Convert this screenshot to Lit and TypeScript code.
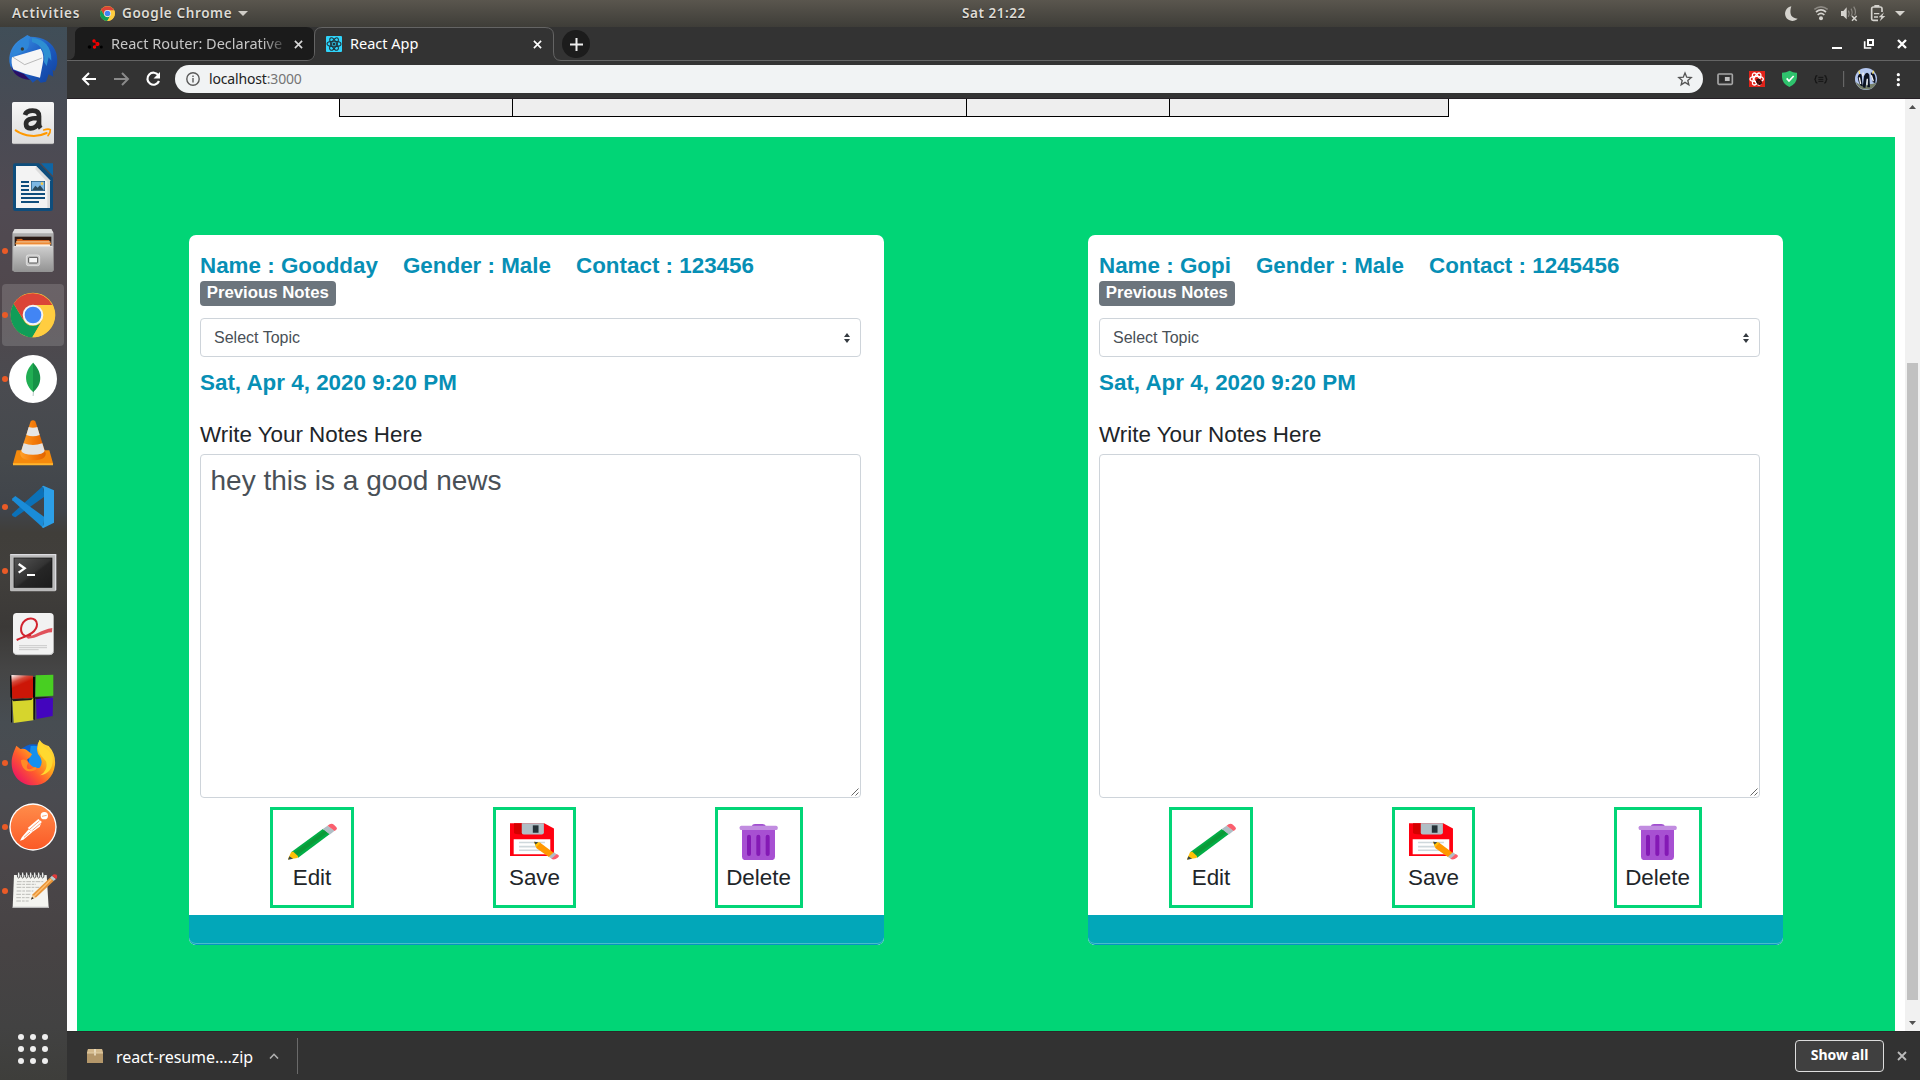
import { LitElement, html, css, svg } from "lit";
import { customElement, property } from "lit/decorators.js";

const chromeLogo = svg`
  <circle cx="99" cy="105" r="67" fill="#fbc73a"/>
  <path d="M41 71A67 67 0 0 0 97 172L127 121A32 32 0 0 1 70 119Z" fill="#109d58"/>
  <path d="M157 74H99L127 121 97 172A67 67 0 0 0 157 74Z" fill="#ffcd40"/>
  <path d="M41 71A67 67 0 0 1 157 75H99L70 119Z" fill="#db4437"/>
  <circle cx="99" cy="105" r="31" fill="#f4f4f4"/><circle cx="99" cy="105" r="25" fill="#4285f4"/>`;

const dockItems: { box: string; on?: boolean; active?: boolean; art: unknown }[] = [
  {
    box: "27 45 144 144",
    art: svg`<defs><linearGradient id="tb" x1="0" y1="0" x2="1" y2="1"><stop offset="0" stop-color="#3f9de8"/><stop offset=".5" stop-color="#1f5fc4"/><stop offset="1" stop-color="#0f3f9c"/></linearGradient></defs>
      <path d="M28 125C26 92 44 66 72 52L82 45 91 50C128 50 160 66 169 100 174 122 172 140 164 153L158 150 160 170 146 163 138 185 122 188 112 178 98 188 90 178C62 176 32 160 28 125Z" fill="url(#tb)"/>
      <path d="M34 138C36 158 54 176 90 180L72 162 40 150Z" fill="#2a0f66"/>
      <path d="M36 112L122 86Q134 104 128 132L120 173Q80 166 40 148Q32 130 36 112Z" fill="#f6f6f6"/>
      <path d="M38 111L74 134 126 114" fill="none" stroke="#9a9a9a" stroke-width="2"/>
      <path d="M36 112C38 84 58 56 84 48L92 52C80 60 92 70 84 84 76 98 52 98 36 112Z" fill="#2f86d8"/>
      <path d="M96 54C132 56 156 80 154 122L146 112 140 138 132 126C136 100 126 74 96 66Z" fill="#2e8fd2"/>
      <circle cx="67" cy="87" r="5" fill="#3a3a30"/>`,
  },
  {
    box: "27 237 144 144",
    art: svg`<defs><linearGradient id="am" x1="0" y1="0" x2="0" y2="1"><stop offset="0" stop-color="#f7f7f7"/><stop offset="1" stop-color="#dcdcdc"/></linearGradient></defs>
      <rect x="36" y="246" width="126" height="126" rx="5" fill="url(#am)"/><path d="M38 371H160" stroke="#aaa" stroke-width="2"/>
      <path d="M75 285Q79 272 98 272Q117 272 117 289V312Q117 319 122 325M116 294Q78 293 78 312Q78 325 92 325Q108 325 116 309" fill="none" stroke="#2b2b2b" stroke-width="14"/>
      <path d="M47 331C74 350 112 353 140 339" fill="none" stroke="#f90" stroke-width="6" stroke-linecap="round"/>
      <path d="M131 330Q145 325 151 329Q152 338 144 347" fill="none" stroke="#f90" stroke-width="5" stroke-linecap="round"/>`,
  },
  {
    box: "27 429 144 144",
    art: svg`<path d="M45 430H117L159 473V566Q159 573 152 573H46Q39 573 39 566V437Q39 430 45 430Z" fill="#0e4d7c"/>
      <path d="M123 430H159V467Z" fill="#0f66a5"/><path d="M48 438H108L150 481V564H48Z" fill="#f3f3f3"/>
      <path d="M108 438L150 481V564H142V486L106 448Z" fill="#dcdcdc"/>
      <path d="M63 486H87M63 498H87M63 510H87M63 522H135M63 534H135M63 546H117" stroke="#0e4d7c" stroke-width="6"/>
      <rect x="94" y="484" width="40" height="28" fill="#7db7e3" stroke="#0e4d7c" stroke-width="2"/><path d="M96 511L106 497 113 503 120 496 132 511Z" fill="#2a4a5c"/><circle cx="126" cy="491" r="4" fill="#f5c84a"/>`,
  },
  {
    box: "27 621 144 144", on: true,
    art: svg`<defs><linearGradient id="fl" x1="0" y1="0" x2="0" y2="1"><stop offset="0" stop-color="#cfcfcf"/><stop offset="1" stop-color="#929292"/></linearGradient></defs>
      <path d="M44 627H154L161 642V752H37V642Z" fill="#adadad"/><path d="M44 627H154L161 640H37Z" fill="#dedede"/>
      <rect x="44" y="650" width="110" height="30" fill="#2a1a14"/><path d="M50 664V658L64 656 70 660H148V682H50Z" fill="#d9651c"/><rect x="48" y="664" width="103" height="4" fill="#f7cf9a"/><rect x="46" y="668" width="107" height="5" fill="#ee8b35"/><rect x="48" y="673" width="103" height="6" fill="#fff1dc"/>
      <rect x="40" y="678" width="119" height="78" rx="4" fill="url(#fl)"/><path d="M42 679H157" stroke="#efefef" stroke-width="2"/>
      <rect x="79" y="705" width="40" height="32" rx="6" fill="#c9c9c9" stroke="#eee" stroke-width="2"/><rect x="86" y="712" width="27" height="17" rx="2" fill="#f4f4f4" stroke="#555" stroke-width="3"/>`,
  },
  { box: "27 33 144 144", on: true, active: true, art: chromeLogo },
  {
    box: "27 225 144 144", on: true,
    art: svg`<circle cx="99" cy="297" r="72" fill="#fff"/><path d="M99 330L98 348H101L102 330Z" fill="#b8c4c2"/>
      <path d="M99 248C78 270 66 302 97 334L100 337V248Z" fill="#21ae53"/><path d="M99 248C120 268 134 304 102 334L99 337Z" fill="#169247"/>`,
  },
  {
    box: "27 417 144 144",
    art: svg`<defs><linearGradient id="vl" x1="0" y1="0" x2="1" y2="0"><stop offset="0" stop-color="#ffa02a"/><stop offset=".5" stop-color="#f57d0b"/><stop offset="1" stop-color="#e06300"/></linearGradient></defs>
      <path d="M50 511H148L159 550V555H39V550Z" fill="#f58a0c"/><path d="M39 550H159V556H39Z" fill="#ffb52e"/>
      <path d="M92 424Q99 417 106 424L137 520Q138 541 99 541T61 520Z" fill="url(#vl)"/>
      <path d="M86 441Q99 446 112 441L119 465Q99 473 79 465Z" fill="#e6e6e6"/><path d="M71 490Q99 500 127 490L134 513Q130 524 99 524T64 513Z" fill="#e2e2e2"/>`,
  },
  {
    box: "27 609 144 144", on: true,
    art: svg`<path d="M130 617L36 702Q35 706 39 709L46 712 133 650Z" fill="#0b71b8"/><path d="M36 656L46 648 133 711 130 744 37 661Z" fill="#1a8cd8"/><path d="M130 617L162 631V728L130 744L125 741Q131 738 132 732V628Q131 621 126 619Z" fill="#2c9fe8"/>`,
  },
  {
    box: "27 21 144 144", on: true,
    art: svg`<defs><linearGradient id="tm" x1="0" y1="0" x2="1" y2="1"><stop offset="0" stop-color="#555"/><stop offset=".5" stop-color="#333"/><stop offset=".55" stop-color="#262626"/><stop offset="1" stop-color="#1c1c1c"/></linearGradient></defs>
      <rect x="30" y="42" width="138" height="112" rx="4" fill="#b9b9b9"/><path d="M31 44H167V151" fill="none" stroke="#dcdce0" stroke-width="4"/><rect x="42" y="54" width="114" height="88" fill="url(#tm)" stroke="#111" stroke-width="2"/>
      <path d="M56 72L74 85 56 98" fill="none" stroke="#fff" stroke-width="7"/><path d="M81 105H105" stroke="#fff" stroke-width="6"/>`,
  },
  {
    box: "27 213 144 144",
    art: svg`<rect x="39" y="219" width="122" height="125" rx="11" fill="#f2f2f2"/><path d="M41 338Q45 344 53 344H148Q158 344 160 336" fill="none" stroke="#c4c4c4" stroke-width="3"/>
      <path d="M50 300C70 290 111 282 111 253 110 229 76 230 65 256 58 280 72 294 94 288" fill="none" stroke="#d2232e" stroke-width="6"/>
      <path d="M78 290C104 290 124 268 157 264L156 277C128 278 110 296 84 296Z" fill="#e0525b"/>
      <path d="M57 317H141M57 323H141M57 329H116" stroke="#b5b5b5" stroke-width="2"/>`,
  },
  {
    box: "27 405 144 144",
    art: svg`<defs><linearGradient id="cb" x1="0" y1="0" x2=".4" y2="1"><stop offset="0" stop-color="#fff"/><stop offset=".3" stop-color="#d54a3a"/><stop offset=".5" stop-color="#cc1607"/></linearGradient></defs>
      <path d="M30 407L36 405V549L33 545 34 476 31 470ZM98 411H106L104 540 97 536Z" fill="#080808"/>
      <path d="M34 405L99 407V474L37 476Z" fill="url(#cb)"/><path d="M107 406L160 404V467L106 470Z" fill="#48cf22"/><path d="M37 481L100 473V541L41 549Z" fill="#d6d52d"/><path d="M108 474L159 473 158 528 110 537Z" fill="#4305bd"/>
      <path d="M35 478L99 474 94 480 40 484ZM101 472L158 471 108 478Z" fill="#1c1c1c"/>`,
  },
  {
    box: "27 597 144 144", on: true,
    art: svg`<defs><linearGradient id="ff" x1="1" y1="0" x2="0" y2="1"><stop offset="0" stop-color="#fff44f"/><stop offset=".35" stop-color="#ffb01a"/><stop offset=".6" stop-color="#ff5a2e"/><stop offset=".85" stop-color="#ee1d5c"/></linearGradient></defs>
      <circle cx="100" cy="666" r="53" fill="#0b5fd0"/><path d="M92 618Q124 612 134 640L116 704 84 690Z" fill="#1590ef"/>
      <path d="M49 617L61 627Q72 624 80 630L96 643Q92 653 81 659 96 688 119 683 133 664 114 642 106 620 119 600 127 613 146 618 168 642 165 675C160 712 136 736 100 736 62 736 36 708 35 672 34 650 42 634 49 617Z" fill="url(#ff)"/>
      <path d="M63 661C70 655 82 660 84 670 74 690 88 692 104 682 112 680 112 690 98 693 78 698 64 684 63 661Z" fill="#ff8a26"/>
      <path d="M119 600C104 632 124 646 138 664 144 682 134 698 120 706 152 702 160 676 158 652 154 630 126 622 119 600Z" fill="#ffd930"/>`,
  },
  {
    box: "27 789 144 144", on: true,
    art: svg`<defs><linearGradient id="pm" x1="0" y1="0" x2="0" y2="1"><stop offset="0" stop-color="#ff8c4a"/><stop offset="1" stop-color="#fb5a27"/></linearGradient></defs>
      <circle cx="99" cy="861" r="71" fill="#fff"/><circle cx="99" cy="861" r="67" fill="url(#pm)"/>
      <circle cx="133" cy="827" r="11" fill="#fff"/><path d="M126 829L140 826" fill="none" stroke="#fb7a3a" stroke-width="2"/>
      <path d="M83 864L115 837 125 845 119 860 98 875Z" fill="#fff"/><path d="M86 868L66 891 60 902 70 899 98 875Z" fill="#fff"/>
      <path d="M90 867L119 842M97 871L122 850M72 892L90 876" stroke="#f4713a" stroke-width="2"/>`,
  },
  {
    box: "27 981 144 144", on: true,
    art: svg`<path d="M42 1005H140L146 1103H38Z" fill="#f4f4f0"/><path d="M38 1102H147" stroke="#bbb" stroke-width="4"/>
      ${[0, 1, 2, 3, 4, 5, 6].map((i) => svg`<ellipse cx=${56 + i * 12} cy="1005" rx="4" ry="9" fill="#eee" stroke="#3a3a3a" stroke-width="2.5"/>`)}
      <path d="M51 1025H130M50 1033H108M50 1042H118M50 1053H100M49 1063H92M49 1073H88M49 1083H86" stroke="#b0b0ac" stroke-width="2.5" stroke-dasharray="14 3 8 3"/>
      <path d="M94 1078L98 1063 150 1013 161 1023 109 1072Z" fill="#e8953a"/><path d="M103 1068L154 1018" stroke="#ffc070" stroke-width="4"/><path d="M94 1078L98 1064 108 1073Z" fill="#f1d2a6"/><path d="M93 1079L96 1071 101 1075Z" fill="#222"/>
      <path d="M150 1013L156 1007 168 1017 161 1023Z" fill="#bcc"/><path d="M156 1007Q162 1000 170 1004 174 1012 168 1017Z" fill="#e03a3a"/>`,
  },
];

@customElement("system-dock")
class SystemDock extends LitElement {
  static styles = css`
    :host { display: flex; flex-direction: column; justify-content: space-between; box-sizing: border-box; width: 67px; height: 1053px; padding: 1px 0 14px 2px;
      background: linear-gradient(#404e58, #484b54 8%, #504a52 17%, #50474c 26%, #4a4b50 34%, #45494d 41%, #40444a 46%, #403e3a 48%, #413f3c 52%, #3b3937 57%, #454545 61%, #474d52 66%, #4a4b50 73%, #4a4649 80%, #474344 87%, #424242 95%, #3e3e3b); }
    .list { display: flex; flex-direction: column; gap: 2px; }
    .item { display: flex; align-items: center; width: 62px; height: 62px; border-radius: 4px; }
    .active { background: rgba(255, 255, 255, 0.15); }
    .dot { width: 6px; height: 6px; border-radius: 50%; }
    .on { background: #ea5b27; }
    .art { width: 48px; height: 48px; margin-left: 1px; overflow: visible; display: block; }
    .apps { width: 34px; height: 34px; margin-left: 14px; display: block; }
  `;
  render() {
    return html`
      <div class="list">
        ${dockItems.map((d) => html`<div class="item ${d.active ? "active" : ""}"><span class="dot ${d.on ? "on" : ""}"></span><svg class="art" viewBox=${d.box}>${d.art}</svg></div>`)}
      </div>
      <svg class="apps" viewBox="0 0 34 34">${[5, 17, 29].map((y) => [5, 17, 29].map((x) => svg`<circle cx=${x} cy=${y} r="3" fill="#eee"/>`))}</svg>
    `;
  }
}

@customElement("note-card")
class NoteCard extends LitElement {
  @property() name = "";
  @property() contact = "";
  @property() note = "";
  static styles = css`
    :host { display: flex; flex-direction: column; box-sizing: border-box; width: 695px; height: 710px; border-radius: 7px; background: #fff; overflow: hidden; font-family: "Liberation Sans", Arial, sans-serif; color: #212529; }
    .body { display: flex; flex-direction: column; align-items: flex-start; padding: 14px 11px 0 11px; height: 680px; box-sizing: border-box; font-size: 22.4px; line-height: 33px; }
    .body > * { flex: none; }
    .who { display: flex; gap: 25px; height: 32px; color: #078fb5; font-weight: 700; white-space: nowrap; }
    .badge { background: #6c757d; color: #fff; font-weight: 700; font-size: 16.8px; line-height: 16.8px; padding: 4.1px 6.7px; border-radius: 4px; white-space: nowrap; }
    .select { display: flex; align-items: center; justify-content: space-between; width: 661px; height: 39px; box-sizing: border-box; margin-top: 12px; padding: 1px 9px 0 13px; border: 1px solid #ced4da; border-radius: 4px; font-size: 16px; line-height: 24px; color: #495057; }
    .carets { width: 8px; height: 10px; display: block; }
    .date { margin-top: 9px; color: #078fb5; font-weight: 700; }
    .label { margin-top: 19px; }
    .area { position: relative; width: 661px; height: 344px; margin-top: 3px; box-sizing: border-box; padding: 5px 9.500px; border: 1px solid #ced4da; border-radius: 4px; font-size: 28px; line-height: 41px; color: #495057; }
    .grip { position: absolute; right: 1px; bottom: 1px; width: 8px; height: 8px; }
    .actions { display: flex; justify-content: space-around; width: 672px; margin-top: 9px; }
    .action { display: flex; flex-direction: column; align-items: center; height: 101px; box-sizing: border-box; border: 3px solid #02d577; padding: 13px 7px 0 8px; }
    .edit { width: 84px; }
    .save { width: 83px; }
    .del { width: 88px; padding-right: 8px; }
    .pic { width: 49px; height: 37px; display: block; flex: none; }
    .cap { line-height: 36px; }
    .foot { flex: 1; background: #02a7b9; border-bottom: 1px solid #0795c2; box-shadow: inset 0 -1px #49bccb; border-radius: 0 0 7px 7px; }
  `;
  render() {
    return html`
      <div class="body">
        <div class="who"><span>Name : ${this.name}</span><span>Gender : Male</span><span>Contact : ${this.contact}</span></div>
        <span class="badge">Previous Notes</span>
        <div class="select"><span>Select Topic</span><svg class="carets" viewBox="0 0 8 10"><path d="M1 4L4 0 7 4ZM1 6L4 10 7 6Z" fill="#343a40"/></svg></div>
        <div class="date">Sat, Apr 4, 2020 9:20 PM</div>
        <div class="label">Write Your Notes Here</div>
        <div class="area">${this.note}<svg class="grip" viewBox="0 0 8 8"><path d="M0.5 7.5L7.5 0.5M4.5 7.5L7.5 4.5" stroke="#666" stroke-width="1"/></svg></div>
        <div class="actions">
          <div class="action edit">
            <svg class="pic" viewBox="69 68 145 110" preserveAspectRatio="none">
              <path d="M78 155L172 86 193 101 99 171Z" fill="#02ad46"/><path d="M84 158L178 89 186 97 93 166Z" fill="#0b9a38"/><path d="M78 155L84 153 99 167 97 172 68 177Z" fill="#ffc107"/><path d="M69 177L73 167 84 174Z" fill="#37474f"/>
              <path d="M172 86L186 76 207 91 193 102Z" fill="#b0bec5"/><path d="M186 76Q196 67 205 73L211 79Q218 86 207 92Z" fill="#fa5f6e"/></svg>
            <span class="cap">Edit</span>
          </div>
          <div class="action save">
            <svg class="pic" viewBox="736 68 146 110" preserveAspectRatio="none">
              <path d="M736 69H838L867 84V166H736Z" fill="#ff0010"/><path d="M748 69H772V102Q748 102 748 97Z" fill="#d50000"/><path d="M771 69H837V96Q837 102 830 102H777Q771 102 771 97Z" fill="#b0bec5"/><path d="M804 75H821V97H804Z" fill="#263238"/>
              <path d="M747 116H856V161H747Z" fill="#fff"/><path d="M763 126H840M763 138H832M763 149H846" stroke="#cfd8dc" stroke-width="5"/>
              <path d="M808 125L826 127 867 157 853 170 815 143Z" fill="#ff9800"/><path d="M808 124L827 127 814 140Z" fill="#ffc107"/><path d="M808 124L820 125 812 132Z" fill="#37474f"/><path d="M867 155L875 161 860 174 852 168Z" fill="#b0bec5"/><path d="M875 160Q887 165 878 171 868 180 859 174Z" fill="#fa5f6e"/></svg>
            <span class="cap">Save</span>
          </div>
          <div class="action del">
            <svg class="pic" viewBox="1407 68 147 110" preserveAspectRatio="none">
              <path d="M1460 78Q1462 71 1470 71H1492Q1500 71 1503 78Z" fill="#a04fcf"/><path d="M1431 87H1530V168Q1530 179 1516 179H1445Q1431 179 1431 168Z" fill="#a750d2"/><rect x="1424" y="76" width="114" height="13" rx="5" fill="#c18ce0"/>
              <path d="M1452 109V160M1480 109V160M1508 109V160" stroke="#8419b5" stroke-width="12" stroke-linecap="round"/></svg>
            <span class="cap">Delete</span>
          </div>
        </div>
      </div>
      <div class="foot"></div>
    `;
  }
}

@customElement("app-root")
class AppRoot extends LitElement {
  static styles = css`
    :host { display: flex; flex-direction: column; width: 1920px; height: 1080px; overflow: hidden; background: #fff; font-family: "Noto Sans", "Open Sans", sans-serif; white-space: nowrap; }
    svg { display: block; flex: none; }
    .top { display: grid; grid-template-columns: 962px auto 1fr; align-items: center; height: 27px; background: linear-gradient(#5a564e, #3e3d38); color: #dedbd5; font-weight: 600; font-size: 13.500px; letter-spacing: 0.55px; text-shadow: 0 1px 1px #222; }
    .top span { line-height: 24px; padding-bottom: 2px; }
    .left { display: flex; align-items: center; padding-left: 12px; }
    .act { width: 88px; letter-spacing: 0.8px; }
    .logo { width: 15px; height: 15px; margin-right: 7px; }
    .gc { width: 116px; letter-spacing: 0.62px; }
    .tray { justify-self: end; width: 140px; height: 27px; }
    .main { display: flex; height: 1053px; }
    .window { display: flex; flex-direction: column; width: 1853px; }
    .strip { position: relative; display: flex; align-items: center; height: 34px; background: #333; font-size: 14.500px; color: #fff; }
    .outline { position: absolute; left: 0; top: 0; width: 1853px; height: 34px; }
    .tab { position: relative; display: flex; align-items: center; height: 34px; }
    .one { width: 227px; padding-left: 16px; margin-left: 4px; color: #c6c6c6; }
    .two { width: 221px; padding-left: 12px; }
    .fav { width: 16px; height: 16px; margin-right: 8px; }
    .t1 { width: 173px; padding-bottom: 2px; overflow: hidden; -webkit-mask-image: linear-gradient(90deg, #000 88%, rgba(0,0,0,.2)); }
    .t2 { width: 183px; padding-bottom: 2px; }
    .x { width: 9px; height: 9px; margin-left: 10px; }
    .x2 { width: 9px; height: 9px; }
    .plus { position: relative; display: flex; align-items: center; justify-content: center; width: 28px; height: 28px; margin-left: 15px; border-radius: 50%; background: #1c1c1c; }
    .plus svg { width: 13px; height: 13px; }
    .wins { position: relative; width: 120px; height: 33px; margin-left: auto; margin-bottom: 1px; }
    .tools { display: flex; align-items: center; height: 37px; background: #333; border-bottom: 1px solid #262026; }
    .nav { width: 108px; height: 37px; }
    .url { display: flex; align-items: center; width: 1528px; height: 28px; margin-bottom: 1px; border-radius: 14px; background: #f1f3f4; box-sizing: border-box; padding: 0 10px 0 11px; font-size: 14px; color: #757575; }
    .info { width: 14px; height: 14px; margin-right: 9px; }
    .addr { flex: 1; padding-bottom: 1px; letter-spacing: -0.16px; }
    .host { color: #222; }
    .star { width: 16px; height: 16px; }
    .ext { width: 217px; height: 37px; }
    .view { display: flex; height: 932px; background: #fff; }
    .page { flex: 1; display: flex; flex-direction: column; align-items: center; }
    .table { display: flex; align-self: flex-start; width: 1110px; height: 18px; margin-left: 272px; box-sizing: border-box; background: #eee; border: 1px solid #000; border-top: 0; margin-bottom: 20px; }
    .c1 { width: 172px; border-right: 1px solid #000; }
    .c2 { width: 453px; border-right: 1px solid #000; }
    .c3 { width: 202px; border-right: 1px solid #000; }
    .green { display: flex; gap: 204px; width: 1818px; height: 894px; box-sizing: border-box; padding: 98px 0 0 112px; background: #01d576; }
    .bar { width: 15px; height: 932px; display: flex; flex-direction: column; align-items: center; background: #f1f1f1; }
    .thumb { width: 11px; height: 637px; background: #c1c1c1; margin-top: 249px; }
    .up { width: 9px; height: 15px; }
    .down { width: 9px; height: 15px; margin-top: auto; }
    .dl { display: flex; align-items: center; height: 49px; box-sizing: border-box; background: #323232; border-top: 1px solid #292929; padding-left: 20px; color: #fff; }
    .zip { width: 16px; height: 16px; margin-bottom: 1px; }
    .file { width: 153px; margin-left: 13px; padding-top: 1px; font-size: 16px; letter-spacing: -0.07px; }
    .chev { width: 10px; height: 6px; }
    .sep { width: 1px; height: 36px; margin-left: 18px; background: #6a6a6a; }
    .show { display: flex; align-items: center; justify-content: center; width: 89px; height: 32px; box-sizing: border-box; margin-left: auto; margin-bottom: 1px; padding-bottom: 2px; border: 1px solid #ddd; border-radius: 4px; background: #404040; font-size: 14px; font-weight: 700; }
    .close { width: 10px; height: 10px; margin: 0 13px 1px; }
  `;
  render() {
    const cross = (c: string) => svg`<path d="M1 1L9 9M9 1L1 9" stroke=${c} stroke-width="1.8"/>`;
    return html`
      <div class="top">
        <div class="left">
          <span class="act">Activities</span><svg class="logo" viewBox="32 38 134 134">${chromeLogo}</svg><span class="gc">Google Chrome</span>
          <svg width="10" height="5" viewBox="0 0 10 5"><path d="M0 0H10L5 5Z" fill="#d0cdc7"/></svg>
        </div>
        <span>Sat 21:22</span>
        <svg class="tray" viewBox="660 0 420 81" fill="#d5d3ce">
          <path d="M694 19A22 22 0 1 0 713 56Q683 54 694 19Z"/>
          <circle cx="783" cy="55" r="6"/><g fill="none" stroke="#d5d3ce" stroke-width="5"><path d="M773 45Q783 35 793 45"/><path d="M768 36Q783 23 798 36" /><path d="M763 28Q783 13 803 28" stroke="#8c8983"/></g>
          <path d="M843 33H850L860 22V58L850 48H843Z"/><path d="M865 32Q870 40 865 50M873 26Q880 38 873 48M881 20Q890 34 884 46" fill="none" stroke="#8c8983" stroke-width="3.5"/><path d="M876 48L890 62M890 48L876 62" stroke="#d5d3ce" stroke-width="4.5"/>
          <path d="M966 36V26Q966 21 961 21H940Q935 21 935 26V57Q935 61 940 61H954" fill="none" stroke="#d5d3ce" stroke-width="5"/><rect x="943" y="15" width="15" height="6"/><path d="M942 39H958V43H942ZM942 49H954V53H942Z"/><path d="M972 37L956 52H964L959 64 976 48H967Z"/>
          <path d="M1005 33H1035L1020 48Z"/>
        </svg>
      </div>
      <div class="main">
        <system-dock></system-dock>
        <div class="window">
          <div class="strip">
            <svg class="outline" viewBox="0 0 1853 34"><path d="M0 33.500H240Q247.500 33 247.500 25V8Q247.500 .5 255 .5H478Q486.500 .5 486.500 8V25Q486.500 33.500 494 33.500H1853" fill="none" stroke="#646464"/><path d="M0 33Q8 33 8 25V8Q8 0 16 0H239Q247 0 247 8V25Q247 33 240 33Z" fill="#1b1b1b"/></svg>
            <div class="tab one">
              <svg class="fav" viewBox="0 0 16 16"><circle cx="7" cy="5" r="1.700" fill="#f00"/><circle cx="10.500" cy="8" r="2" fill="#f00"/><circle cx="7.500" cy="11" r="1.700" fill="#f00"/><path d="M7 5L10.500 8 7.500 11" fill="none" stroke="#d00" stroke-width="1.200"/><circle cx="2.500" cy="11" r="1.800" fill="#000"/><circle cx="14.300" cy="11" r="1.500" fill="#000"/></svg>
              <span class="t1">React Router: Declarative</span><svg class="x" viewBox="0 0 10 10">${cross("#d8d8d8")}</svg>
            </div>
            <div class="tab two">
              <svg class="fav" viewBox="0 0 16 16"><rect width="16" height="16" rx="1" fill="#2fd4fb"/><g fill="none" stroke="#20353c" stroke-width="1.100"><ellipse cx="8" cy="8" rx="7" ry="2.700"/><ellipse cx="8" cy="8" rx="7" ry="2.700" transform="rotate(60 8 8)"/><ellipse cx="8" cy="8" rx="7" ry="2.700" transform="rotate(120 8 8)"/></g><circle cx="8" cy="8" r="1.500" fill="#20353c"/></svg>
              <span class="t2">React App</span><svg class="x2" viewBox="0 0 10 10">${cross("#fff")}</svg>
            </div>
            <div class="plus"><svg viewBox="0 0 13 13"><path d="M6.500 0V13M0 6.500H13" stroke="#eee" stroke-width="2"/></svg></div>
            <svg class="wins" viewBox="720 81 360 99"><path d="M816 141H846V147H816Z" fill="#fff"/><path d="M924 120H939V135H924Z" fill="none" stroke="#fff" stroke-width="6"/><path d="M914 124V144H934" fill="none" stroke="#fff" stroke-width="5"/><path d="M1014 120L1038 144M1038 120L1014 144" stroke="#fff" stroke-width="7"/></svg>
          </div>
          <div class="tools">
            <svg class="nav" viewBox="0 0 108 37" fill="none" stroke-width="2"><path d="M29 18H16.500M22 12L16 18 22 24" stroke="#fff"/><path d="M47 18H60.500M55 12L61 18 55 24" stroke="#8a8a8a"/><path d="M91.500 14.500A6 6 0 1 0 92 20" stroke="#fff" stroke-width="2.200"/><path d="M93 11V17.500H86.500Z" fill="#fff"/></svg>
            <div class="url">
              <svg class="info" viewBox="0 0 14 14"><circle cx="7" cy="7" r="6.200" fill="none" stroke="#5a5a5a" stroke-width="1.400"/><path d="M6.300 6H7.700V10.500H6.300ZM6.300 3.500H7.700V5H6.300Z" fill="#5a5a5a"/></svg>
              <span class="addr"><span class="host">localhost</span>:3000</span>
              <svg class="star" viewBox="0 0 24 24"><path d="M12 3L14.600 9.200 21.300 9.700 16.200 14.100 17.800 20.600 12 17.100 6.200 20.600 7.800 14.100 2.700 9.700 9.400 9.200Z" fill="none" stroke="#555" stroke-width="2"/></svg>
            </div>
            <svg class="ext" viewBox="429 183 651 111">
              <rect x="474" y="222" width="43" height="31" rx="3" fill="none" stroke="#a6a6a6" stroke-width="5"/><rect x="494" y="231" width="15" height="12" fill="#c0c0c0"/><rect x="481" y="229" width="13" height="16" fill="#2b2b2b"/>
              <rect x="567" y="213" width="48" height="48" fill="#e2231a"/><g fill="none" stroke="#fff" stroke-width="4"><ellipse cx="590" cy="237" rx="20" ry="8"/><ellipse cx="590" cy="237" rx="20" ry="8" transform="rotate(60 590 237)"/><ellipse cx="590" cy="237" rx="20" ry="8" transform="rotate(120 590 237)"/></g><ellipse cx="597" cy="245" rx="8" ry="10" fill="#2a0c0a" transform="rotate(-35 597 245)"/><path d="M588 240L608 251M592 255L604 236" stroke="#8a1510" stroke-width="2"/>
              <path d="M689 212Q701 219 711 218V232Q710 252 688 261Q667 252 666 232V218Q678 218 689 212Z" fill="#2fc36d"/><path d="M680 235L687 243 701 228" fill="none" stroke="#fff" stroke-width="5"/>
              <g fill="none" stroke="#151515" stroke-width="4"><path d="M772 227Q767 227 767 232 767 238 763 238 767 238 767 244 767 249 772 249M793 227Q798 227 798 232 798 238 802 238 798 238 798 244 798 249 793 249"/><path d="M775 232H790M775 238H790M775 244H790" stroke-width="3"/></g>
              <path d="M851 213V261" stroke="#707070" stroke-width="3"/>
              <circle cx="918" cy="237" r="33" fill="#b3c6ef"/><path d="M887 246A33 33 0 0 0 949 248L936 252 900 254Z" fill="#77806a"/>
              <path d="M893 232Q897 216 905 224L908 258Q898 262 893 232ZM912 228Q920 210 928 224L930 262 922 262 921 236 916 264 908 262ZM932 218Q944 214 947 236L946 250 938 246Z" fill="#0c1222"/><path d="M898 232L902 252M922 236L921 256M934 226L940 244M910 218L908 228" stroke="#f5f5f5" stroke-width="4"/><path d="M897 212L899 222M941 212L938 221" stroke="#f3dc6a" stroke-width="4"/>
              <g fill="#fff"><circle cx="1015" cy="224" r="4.800"/><circle cx="1015" cy="239" r="4.800"/><circle cx="1015" cy="254" r="4.800"/></g>
            </svg>
          </div>
          <div class="view">
            <div class="page">
              <div class="table"><div class="c1"></div><div class="c2"></div><div class="c3"></div></div>
              <div class="green">
                <note-card name="Goodday" contact="123456" note="hey this is a good news"></note-card>
                <note-card name="Gopi" contact="1245456"></note-card>
              </div>
            </div>
            <div class="bar">
              <svg class="up" viewBox="0 0 9 15"><path d="M1 10L4.500 6 8 10Z" fill="#505050"/></svg>
              <div class="thumb"></div>
              <svg class="down" viewBox="0 0 9 15"><path d="M1 5L4.500 9 8 5Z" fill="#505050"/></svg>
            </div>
          </div>
          <div class="dl">
            <svg class="zip" viewBox="0 0 16 16"><path d="M1 1H15L16 5V15H0V5Z" fill="#b4976a"/><path d="M1 1H15L16 5H0Z" fill="#d3b98c"/><path d="M7.200 1H8.800V7.500H7.200Z" fill="#efe2c8"/><path d="M0 5H16" stroke="#e0cca4"/></svg>
            <span class="file">react-resume….zip</span>
            <svg class="chev" viewBox="0 0 10 6"><path d="M1 5.500L5 1.300 9 5.500" fill="none" stroke="#b0b0b0" stroke-width="1.600"/></svg>
            <div class="sep"></div>
            <div class="show">Show all</div>
            <svg class="close" viewBox="0 0 10 10">${cross("#bbb")}</svg>
          </div>
        </div>
      </div>
    `;
  }
}
